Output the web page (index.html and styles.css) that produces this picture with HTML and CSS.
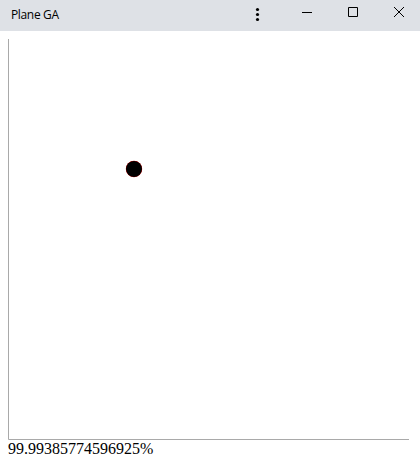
FILE: index.html
```html
<!DOCTYPE html>
<html lang="en">
<head>
<meta charset="utf-8">
<title>Plane GA</title>
<link rel="stylesheet" href="styles.css">
</head>
<body>
<header class="titlebar">
  <span class="title">Plane GA</span>
  <svg class="menu" width="24" height="30" viewBox="0 0 24 30"><circle cx="11.5" cy="9.5" r="1.6"/><circle cx="11.5" cy="14.5" r="1.6"/><circle cx="11.5" cy="19.5" r="1.6"/></svg>
  <svg class="control" width="46" height="30" viewBox="0 0 46 30"><path d="M18 12.5h10"/></svg>
  <svg class="control" width="46" height="30" viewBox="0 0 46 30"><path d="M18.5 7.5h9v9h-9z"/></svg>
  <svg class="control" width="46" height="30" viewBox="0 0 46 30"><path d="M18 7l10 10M28 7l-10 10"/></svg>
</header>
<main>
  <svg class="plane" width="401" height="401" viewBox="0 0 401 401">
    <path class="axis" d="M.5 0v400.5H401"/>
    <circle class="halo" cx="126" cy="130" r="8.2"/>
    <circle cx="126" cy="130" r="8"/>
  </svg>
  <div class="fitness">99.99385774596925%</div>
</main>
</body>
</html>
```

FILE: styles.css
```css
body {
  margin: 0;
  height: 469px;
  overflow: hidden;
  background: #fff;
  color: #000;
}

.titlebar {
  display: flex;
  height: 31px;
  box-sizing: border-box;
  padding-left: 11px;
  background: #dee1e6;
}

.title {
  flex: 1;
  font: 12px/30px "Open Sans", sans-serif;
  letter-spacing: -0.35px;
}

.menu {
  margin-right: 14px;
}

.control {
  fill: none;
  stroke: #000;
  stroke-width: 1;
}

.control:last-child {
  margin-right: -2px;
}

main {
  padding: 8px;
}

.plane {
  display: block;
}

.axis {
  fill: none;
  stroke: #a9a9a9;
}

.halo {
  fill: #f00;
}

.fitness {
  font: 16px/18px "Liberation Serif", serif;
}
```
